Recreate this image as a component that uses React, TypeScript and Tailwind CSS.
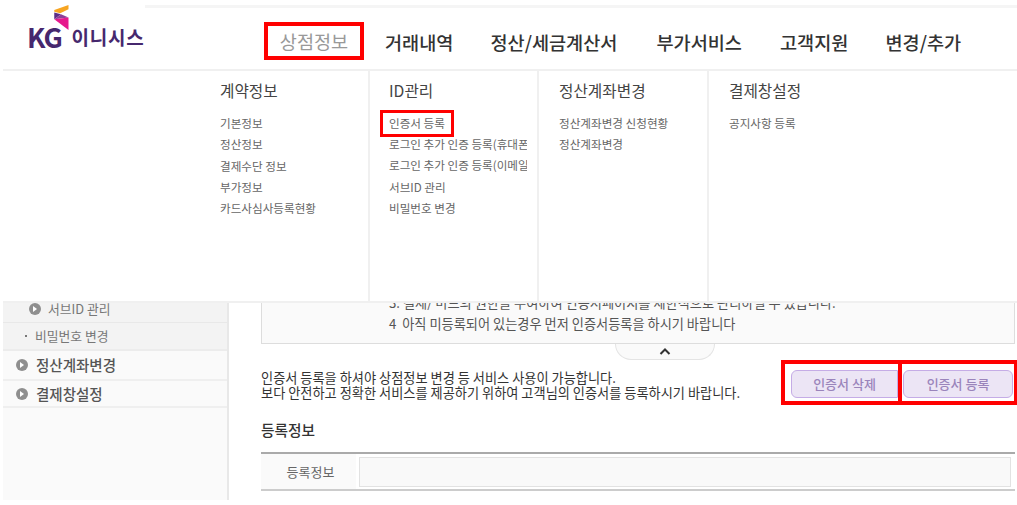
const FONT = "font-['Noto_Sans_CJK_KR','Noto_Sans',sans-serif]";

const MENU = [
  { title: "계약정보", items: ["기본정보", "정산정보", "결제수단 정보", "부가정보", "카드사심사등록현황"], box: "w-[170px] pl-[20px] border-r-2" },
  { title: "ID관리", items: ["인증서 등록", "로그인 추가 인증 등록(휴대폰)", "로그인 추가 인증 등록(이메일)", "서브ID 관리", "비밀번호 변경"], box: "w-[169px] pl-[19px] border-r-2" },
  { title: "정산계좌변경", items: ["정산계좌변경 신청현황", "정산계좌변경"], box: "w-[170px] pl-[20px] border-r-2" },
  { title: "결제창설정", items: ["공지사항 등록"], box: "flex-1 pl-[20px]" },
];

function Logo() {
  return (
    <div className="relative h-[56px] w-[261px] shrink-0">
      <svg className="absolute left-[49px] top-[-8px]" width="18" height="25" viewBox="0 0 24 30" preserveAspectRatio="none">
        <path d="M3 6 L22 0 L22 5 L11 10 L3 8 Z" fill="#f7a521" />
        <path d="M3 9 L12 11 L3 17 Z" fill="#5b2d86" />
        <path d="M12 11 L22 15 L3 17 Z" fill="#8e3f97" />
        <path d="M3 17 L22 15 L22 30 Z" fill="#e6198c" />
      </svg>
      <div className="absolute left-[24px] top-[8px] flex items-center gap-[10px] whitespace-nowrap text-[#46286e]">
        <span className="text-[27px] font-bold leading-[32px] tracking-[-1.3px]">KG</span>
        <span className="text-[19px] font-bold leading-[32px] tracking-[0.8px]">이니시스</span>
      </div>
    </div>
  );
}

function NavItem({ label, className }: { label: string; className: string }) {
  return <span className={`mt-[2px] whitespace-nowrap text-[18.6px] font-medium leading-[36px] text-[#333] ${className}`}>{label}</span>;
}

function Header() {
  return (
    <div className="flex h-[61px] items-center bg-white pt-[5px]">
      <Logo />
      <div className="box-border h-[38px] w-[100px] shrink-0 border-[4px] border-[#f00] text-center">
        <span className="whitespace-nowrap text-[18.6px] leading-[30px] text-[#999]">상점정보</span>
      </div>
      <NavItem label="거래내역" className="ml-[21px]" />
      <NavItem label="정산/세금계산서" className="ml-[37px]" />
      <NavItem label="부가서비스" className="ml-[39px]" />
      <NavItem label="고객지원" className="ml-[38px]" />
      <NavItem label="변경/추가" className="ml-[37px]" />
    </div>
  );
}

function MegaMenu() {
  return (
    <div className="flex h-[234px] border-y-2 border-[#f0f0f0] bg-white pl-[197px]">
      {MENU.map((col, i) => (
        <div key={col.title} className={`${col.box} border-[#f0f0f0] pt-[8px]`}>
          <div className="text-[15.7px] leading-[24px] text-[#444]">{col.title}</div>
          <ul className="mt-[10px] text-[11.6px] leading-[21.3px] text-[#666]">
            {col.items.map((item, j) =>
              i === 1 && j === 0 ? (
                <li key={item} className="-ml-[9px] -mt-[3px] mb-[-3px]">
                  <span className="box-border inline-block h-[27px] w-[74px] whitespace-nowrap border-[3px] border-[#f00] pl-[6px] leading-[21px]">{item}</span>
                </li>
              ) : (
                <li key={item} className="w-[138px] overflow-hidden whitespace-nowrap">{item}</li>
              ),
            )}
          </ul>
        </div>
      ))}
    </div>
  );
}

function Bullet() {
  return (
    <span className="flex h-[12px] w-[12px] shrink-0 items-center justify-center rounded-full bg-[#8f8f8f]">
      <span className="h-0 w-0 border-y-[3px] border-l-[4px] border-y-transparent border-l-white" />
    </span>
  );
}

function Sidebar() {
  return (
    <div className="w-[226px] shrink-0 border-r-2 border-[#e8e8e8] bg-[#fafafa]">
      <div className="flex h-[20px] items-center border-b border-[#e8e8e8] bg-[#f3f3f3] pb-[8px] pl-[26px] text-[12.8px] text-[#777]">
        <Bullet />
        <span className="ml-[7px]">서브ID 관리</span>
      </div>
      <div className="flex h-[28px] items-center border-b-2 border-[#ececec] bg-[#f3f3f3] pl-[22px] text-[12.8px] text-[#777]">
        <span className="mr-[8px] h-[2px] w-[2px] bg-[#777]" />
        비밀번호 변경
      </div>
      <div className="flex h-[30px] items-center border-b-2 border-[#efefef] pl-[13px] text-[14.5px] font-medium text-[#555]">
        <Bullet />
        <span className="ml-[8px]">정산계좌변경</span>
      </div>
      <div className="flex h-[27px] items-center border-b-2 border-[#efefef] pl-[13px] text-[14.5px] font-medium text-[#555]">
        <Bullet />
        <span className="ml-[8px]">결제창설정</span>
      </div>
    </div>
  );
}

function ActionButton({ label, box, inner }: { label: string; box: string; inner: string }) {
  return (
    <div className={`box-border h-[45px] shrink-0 border-[4px] border-[#f00] bg-white pt-[6px] ${box}`}>
      <div className={`flex h-[28px] items-center justify-center border border-[#c5ace6] bg-[#ece5f5] text-[13px] font-medium text-[#9a84bb] ${inner}`}>
        {label}
      </div>
    </div>
  );
}

function Content() {
  return (
    <div className="w-[788px]">
      <div className="ml-[32px] mr-[2px] h-[41px] overflow-hidden border-x border-b border-[#ddd] bg-[#fafafa] pl-[127px] text-[13.2px] leading-[21px] text-[#555]">
        <div className="-mt-[11px] whitespace-nowrap">3. 결제/ 미드의 권한을 부여하여 인증서페이지를 제한적으로 관리하실 수 있습니다.</div>
        <div className="whitespace-nowrap">4&nbsp;&nbsp;아직 미등록되어 있는경우 먼저 인증서등록을 하시기 바랍니다</div>
      </div>
      <div className="ml-[386px] flex h-[16px] w-[100px] items-center justify-center rounded-b-[16px] border-x border-b border-[#e4e4e4] bg-[#fafafa]">
        <svg width="12" height="7" viewBox="0 0 12 7" fill="none" stroke="#333" strokeWidth="2">
          <path d="M1.5 6 L6 1.5 L10.5 6" />
        </svg>
      </div>
      <div className="ml-[32px] flex h-[45px]">
        <p className="mt-[10px] w-[520px] shrink-0 whitespace-nowrap text-[13.2px] leading-[15px] text-[#333]">
          인증서 등록을 하셔야 상점정보 변경 등 서비스 사용이 가능합니다.
          <br />
          보다 안전하고 정확한 서비스를 제공하기 위하여 고객님의 인증서를 등록하시기 바랍니다.
        </p>
        <ActionButton label="인증서 삭제" box="w-[121px] pl-[6px]" inner="w-[107px] rounded-l-[6px]" />
        <ActionButton label="인증서 등록" box="-ml-[4px] w-[120px] pl-[1px]" inner="w-[110px] rounded-[6px]" />
      </div>
      <div className="ml-[32px] mt-[14px] text-[14.7px] font-medium leading-[22px] text-[#333]">등록정보</div>
      <div className="ml-[32px] mr-[2px] mt-[11px] flex h-[39px] items-center border-y-2 border-t-[#aaa] border-b-[#ccc] pr-[4px]">
        <div className="flex h-full w-[95px] items-center justify-center bg-[#fafafa] pl-[4px] text-[13px] text-[#666]">등록정보</div>
        <div className="ml-[3px] h-[30px] flex-1 border border-[#e2e2e2] bg-[#f9f9f9]" />
      </div>
    </div>
  );
}

export default function App() {
  return (
    <div className={`${FONT} h-[505px] w-[1017px] overflow-hidden bg-white pl-[3px] pt-[5px]`}>
      <div className="ml-[142px] h-[3px] bg-[#f5f5f5]" />
      <Header />
      <MegaMenu />
      <div className="flex h-[197px]">
        <Sidebar />
        <Content />
      </div>
    </div>
  );
}
